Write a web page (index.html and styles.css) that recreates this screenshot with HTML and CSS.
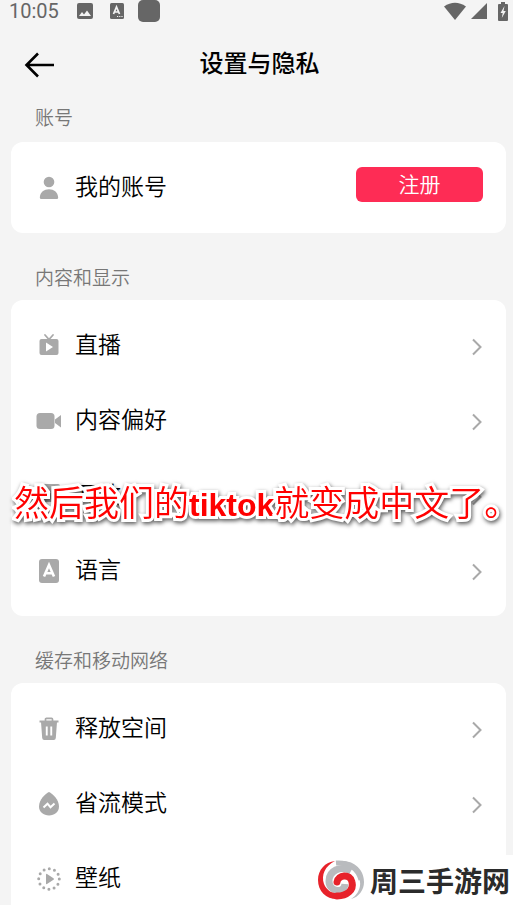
FILE: index.html
```html
<!DOCTYPE html>
<html lang="zh-CN">
<head>
<meta charset="utf-8">
<meta name="viewport" content="width=device-width, initial-scale=1">
<title>设置与隐私</title>
<link rel="stylesheet" href="styles.css">
</head>
<body>
<div class="status">
  <span class="clock">10:05</span>
  <svg class="s-photo" width="18" height="18" viewBox="0 0 18 18"><rect x="1" y="1" width="16" height="16" rx="2" fill="#666"/><path d="M3 14l3-4 2 2.500 3-4 4 5.500z" fill="#f4f4f4"/></svg>
  <svg class="s-lang" width="14" height="16" viewBox="0 0 14 16"><rect width="14" height="16" rx="1.500" fill="#666"/><path d="M3.500 11L6.500 4l3 7M4.500 9h4" fill="none" stroke="#f4f4f4" stroke-width="1.700"/><path d="M7 13.500h6" stroke="#f4f4f4" stroke-dasharray="1.200 1"/></svg>
  <svg class="s-app" width="22" height="22" viewBox="0 0 22 22"><rect width="22" height="22" rx="5" fill="#666"/></svg>
  <span class="grow"></span>
  <svg class="s-wifi" width="24" height="18" viewBox="0 0 24 18"><path d="M1 4.500Q12-3 23 4.500L12 18z" fill="#666"/></svg>
  <svg class="s-cell" width="16" height="16" viewBox="0 0 16 16"><path d="M0 16L16 0v16z" fill="#666"/></svg>
  <svg class="s-batt" width="10" height="19" viewBox="0 0 10 19"><path d="M3 0h4v2h2q1 0 1 1v15q0 1-1 1H1q-1 0-1-1V3q0-1 1-1h2z" fill="#666"/><path d="M6.500 4L2.500 11h2.200L3.800 16l4-7H5.500z" fill="#f4f4f4"/></svg>
</div>
<header class="bar">
  <button class="back" aria-label="返回"><svg width="32" height="26" viewBox="0 0 32 26"><path d="M30 13H3M14 1.500L2.500 13 14 24.500" fill="none" stroke="#000" stroke-width="2.600"/></svg></button>
  <h1>设置与隐私</h1>
</header>
<main>
  <h2 class="first">账号</h2>
  <section class="card">
    <div class="row">
      <svg class="icon" viewBox="0 0 26 26"><circle cx="13" cy="7" r="5.300"/><path d="M3.800 22.500C4.300 17 8 14.300 13 14.300s8.700 2.700 9.200 8.200q0 1.500-1.500 1.500H5.300q-1.500 0-1.500-1.500z"/></svg>
      <span class="label">我的账号</span>
      <button class="signup">注册</button>
    </div>
  </section>
  <h2>内容和显示</h2>
  <section class="card">
    <a class="row" href="#live">
      <svg class="icon" viewBox="0 0 26 26"><path d="M9 2l4 4.500L17 2" fill="none" stroke="#a9a9a9" stroke-width="1.800" stroke-linecap="round"/><path fill-rule="evenodd" d="M5.500 6h15q2 0 2 2v12q0 2-2 2h-15q-2 0-2-2V8q0-2 2-2zM10 9.500v9l7-4.500z"/></svg>
      <span class="label">直播</span>
      <svg class="chev" viewBox="0 0 12 18"><path d="M2 1.500L9.500 9 2 16.500"/></svg>
    </a>
    <a class="row" href="#content">
      <svg class="icon" viewBox="0 0 26 26"><rect x="0.500" y="5" width="18" height="16" rx="3.500"/><path d="M19 11.500l6-4.500v12.500l-6-4.500z"/></svg>
      <span class="label">内容偏好</span>
      <svg class="chev" viewBox="0 0 12 18"><path d="M2 1.500L9.500 9 2 16.500"/></svg>
    </a>
    <a class="row" href="#open">
      <svg class="icon" viewBox="0 0 26 26"><rect x="2" y="1" width="22" height="18" rx="2"/></svg>
      <span class="label">开放</span>
      <svg class="chev" viewBox="0 0 12 18"><path d="M2 1.500L9.500 9 2 16.500"/></svg>
    </a>
    <a class="row" href="#language">
      <svg class="icon" viewBox="0 0 26 26"><rect x="3" y="1" width="20" height="24" rx="3"/><path d="M8 18.500L13 7l5 11.500M9.500 15.200h7" fill="none" stroke="#fff" stroke-width="2.600"/></svg>
      <span class="label">语言</span>
      <svg class="chev" viewBox="0 0 12 18"><path d="M2 1.500L9.500 9 2 16.500"/></svg>
    </a>
    <p class="caption">然后我们的<b>tiktok</b>就变成中文了。</p>
  </section>
  <h2>缓存和移动网络</h2>
  <section class="card">
    <a class="row" href="#storage">
      <svg class="icon" viewBox="0 0 26 26"><path d="M9.500 5V3.300q0-1 1-1h5q1 0 1 1V5" fill="none" stroke="#a9a9a9" stroke-width="1.700"/><path d="M3.500 4.500h19v2h-19z"/><path fill-rule="evenodd" d="M5 6h16l-1.200 16q-.2 2-2 2H8.200q-1.800 0-2-2zM9.800 10.500v9h1.900v-9zM14.300 10.500v9h1.900v-9z"/></svg>
      <span class="label">释放空间</span>
      <svg class="chev" viewBox="0 0 12 18"><path d="M2 1.500L9.500 9 2 16.500"/></svg>
    </a>
    <a class="row" href="#data">
      <svg class="icon" viewBox="0 0 26 26"><path d="M13 1C9.500 2.500 3 8.500 3 15.500 3 21 7.500 24.500 13 24.500S23 21 23 15.500C23 8.500 16.500 2.500 13 1z"/><path d="M7.500 16.500l4-3.800 3 3.500 4-3.700" fill="none" stroke="#fff" stroke-width="2"/></svg>
      <span class="label">省流模式</span>
      <svg class="chev" viewBox="0 0 12 18"><path d="M2 1.500L9.500 9 2 16.500"/></svg>
    </a>
    <a class="row" href="#wallpaper">
      <svg class="icon" viewBox="0 0 26 26"><circle cx="13" cy="13" r="10.300" fill="none" stroke="#a9a9a9" stroke-width="3" stroke-linecap="round" stroke-dasharray="0 5.393"/><path d="M10 8.500q0-1 1-.5l6.500 4.200q1 .8 0 1.600L11 18q-1 .5-1-.5z"/></svg>
      <span class="label">壁纸</span>
      <svg class="chev" viewBox="0 0 12 18"><path d="M2 1.500L9.500 9 2 16.500"/></svg>
    </a>
  </section>
</main>
<div class="mark">
  <svg width="48" height="40" viewBox="0 0 48 40"><path d="M19 2C34-2 47 8 47 22c0 8-5 15-13 17 8-5 11-14 8-21C39 9 31 4 19 2z" fill="#b9bbbe"/><path d="M19 3c12-1 22 5 25 17" fill="none" stroke="#b9bbbe" stroke-width="5"/><path d="M34 11C23 5 12 11 12 21c0 11 15 13 16 3" fill="none" stroke="#b9bbbe" stroke-width="7"/><path d="M18 1C8 6 4 15 7 24c3 7 9 10 15 9v6C10 40 1 32 1 20 1 10 8 2 18 1z" fill="#e7222a"/><path d="M20 22c1-7 13-9 15 0 2 8-5 14-15 14" fill="none" stroke="#e7222a" stroke-width="7" stroke-linecap="round"/></svg>
  <span>周三手游网</span>
</div>
</body>
</html>
```
FILE: styles.css
```css
* { box-sizing: border-box; }
html, body { height: 100%; }
body {
  margin: 0;
  position: relative;
  overflow: hidden;
  background: #f4f4f4;
  color: #000;
  font-family: "Noto Sans CJK SC", sans-serif;
}
svg { flex: none; display: block; }
.status {
  display: flex;
  align-items: center;
  height: 22px;
  padding: 0 5px 0 9px;
  color: #666;
}
.clock { font: 20px/24px Roboto, sans-serif; width: 67px; }
.s-lang { margin-left: 16px; }
.s-app { margin-left: 14px; }
.grow { flex: 1; }
.s-cell { margin-left: 4px; }
.s-batt { margin-left: 11px; }
.bar {
  display: grid;
  place-items: center;
  height: 80px;
  padding-left: 6px;
}
.bar > * { grid-area: 1 / 1; }
.back {
  justify-self: start;
  margin: 6px 0 0 18px;
  padding: 0;
  border: 0;
  background: none;
}
h1 { margin: 0; font-size: 24px; line-height: 36px; font-weight: 500; }
main { padding: 0 7px 0 11px; }
h2 {
  margin: 0;
  padding: 29px 24px 9px;
  color: #777;
  font-size: 19px;
  line-height: 29px;
  font-weight: 350;
}
h2.first { padding: 0 24px 11px; }
.card {
  position: relative;
  padding: 8px 23px 8px 24px;
  border-radius: 12px;
  background: #fff;
}
.row {
  display: flex;
  align-items: center;
  height: 75px;
  color: #000;
  text-decoration: none;
}
.icon { width: 26px; height: 26px; margin: 1px 13px 0 1px; fill: #a9a9a9; }
.label { flex: 1; padding-bottom: 6px; font-size: 23px; line-height: 34px; font-weight: 350; }
.chev {
  width: 12px;
  height: 18px;
  margin-top: 3px;
  fill: none;
  stroke: #a9a9a9;
  stroke-width: 2;
}
.signup {
  width: 127px;
  height: 35px;
  margin-bottom: 6px;
  padding: 0 0 3px;
  border: 0;
  border-radius: 6px;
  background: #fe2c55;
  color: #fff;
  font: 350 21px/32px "Noto Sans CJK SC", sans-serif;
}
.caption {
  position: absolute;
  left: 3px;
  top: 175px;
  margin: 0;
  color: #f00;
  font-size: 35px;
  line-height: 52px;
  font-weight: 350;
  white-space: nowrap;
  -webkit-text-stroke: 6px #fff;
  paint-order: stroke fill;
  stroke-linejoin: round;
  filter: drop-shadow(1px 2px 2px rgba(0, 0, 0, .65));
}
.caption b { font: bold 32px "Liberation Sans", sans-serif; }
.mark {
  position: absolute;
  right: 0;
  bottom: 0;
  display: flex;
  align-items: center;
  height: 50px;
  padding-right: 3px;
  background: #fff;
  color: #2b2b2b;
  font-size: 28px;
  line-height: 40px;
  font-weight: 700;
}
.mark svg { margin-right: 5px; }
```
